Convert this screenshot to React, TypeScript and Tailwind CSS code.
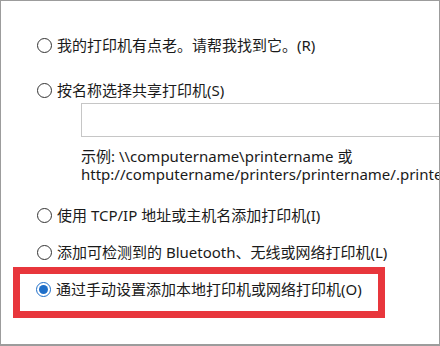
const font = { fontFamily: '"Noto Sans", "Noto Sans CJK SC", sans-serif' };

const Radio = ({ checked }: { checked?: boolean }) =>
  checked ? (
    <span className="flex h-[15px] w-[15px] shrink-0 items-center justify-center rounded-full border border-[#1f6fc9] bg-white">
      <span className="h-[9px] w-[9px] rounded-full bg-[#1f6fc9]" />
    </span>
  ) : (
    <span className="h-[15px] w-[15px] shrink-0 rounded-full border border-[#333333] bg-white" />
  );

const Option = ({ label, checked }: { label: string; checked?: boolean }) => (
  <div className="flex h-[22px] items-center gap-[5px] whitespace-nowrap">
    <Radio checked={checked} />
    <span className="text-[15px] leading-[22px] text-[#1a1a1a]">{label}</span>
  </div>
);

export default function App() {
  return (
    <div
      className="h-[346px] w-[440px] overflow-hidden border border-b-2 border-[#9c9c9c] bg-white"
      style={font}
    >
      <div className="flex flex-col pl-[36px] pt-[33px]">
        <Option label="我的打印机有点老。请帮我找到它。(R)" />
        <div className="mt-[23px]">
          <Option label="按名称选择共享打印机(S)" />
        </div>
        <div className="ml-[44px] mt-[2px] h-[34px] w-[420px] shrink-0 border border-[#c6c6c6] bg-white" />
        <div className="ml-[44px] mt-[10px] whitespace-nowrap text-[15px] leading-[18px] text-[#1a1a1a]">
          <div>示例: \\computername\printername 或</div>
          <div>http://computername/printers/printername/.printer</div>
        </div>
        <div className="mt-[21px]">
          <Option label="使用 TCP/IP 地址或主机名添加打印机(I)" />
        </div>
        <div className="mt-[15px]">
          <Option label="添加可检测到的 Bluetooth、无线或网络打印机(L)" />
        </div>
      </div>
      <div className="ml-[12px] mt-[4px] h-[51px] w-[372px] border-[7px] border-[#e8363c] pl-[16px] pt-[4px]">
        <Option label="通过手动设置添加本地打印机或网络打印机(O)" checked />
      </div>
    </div>
  );
}
